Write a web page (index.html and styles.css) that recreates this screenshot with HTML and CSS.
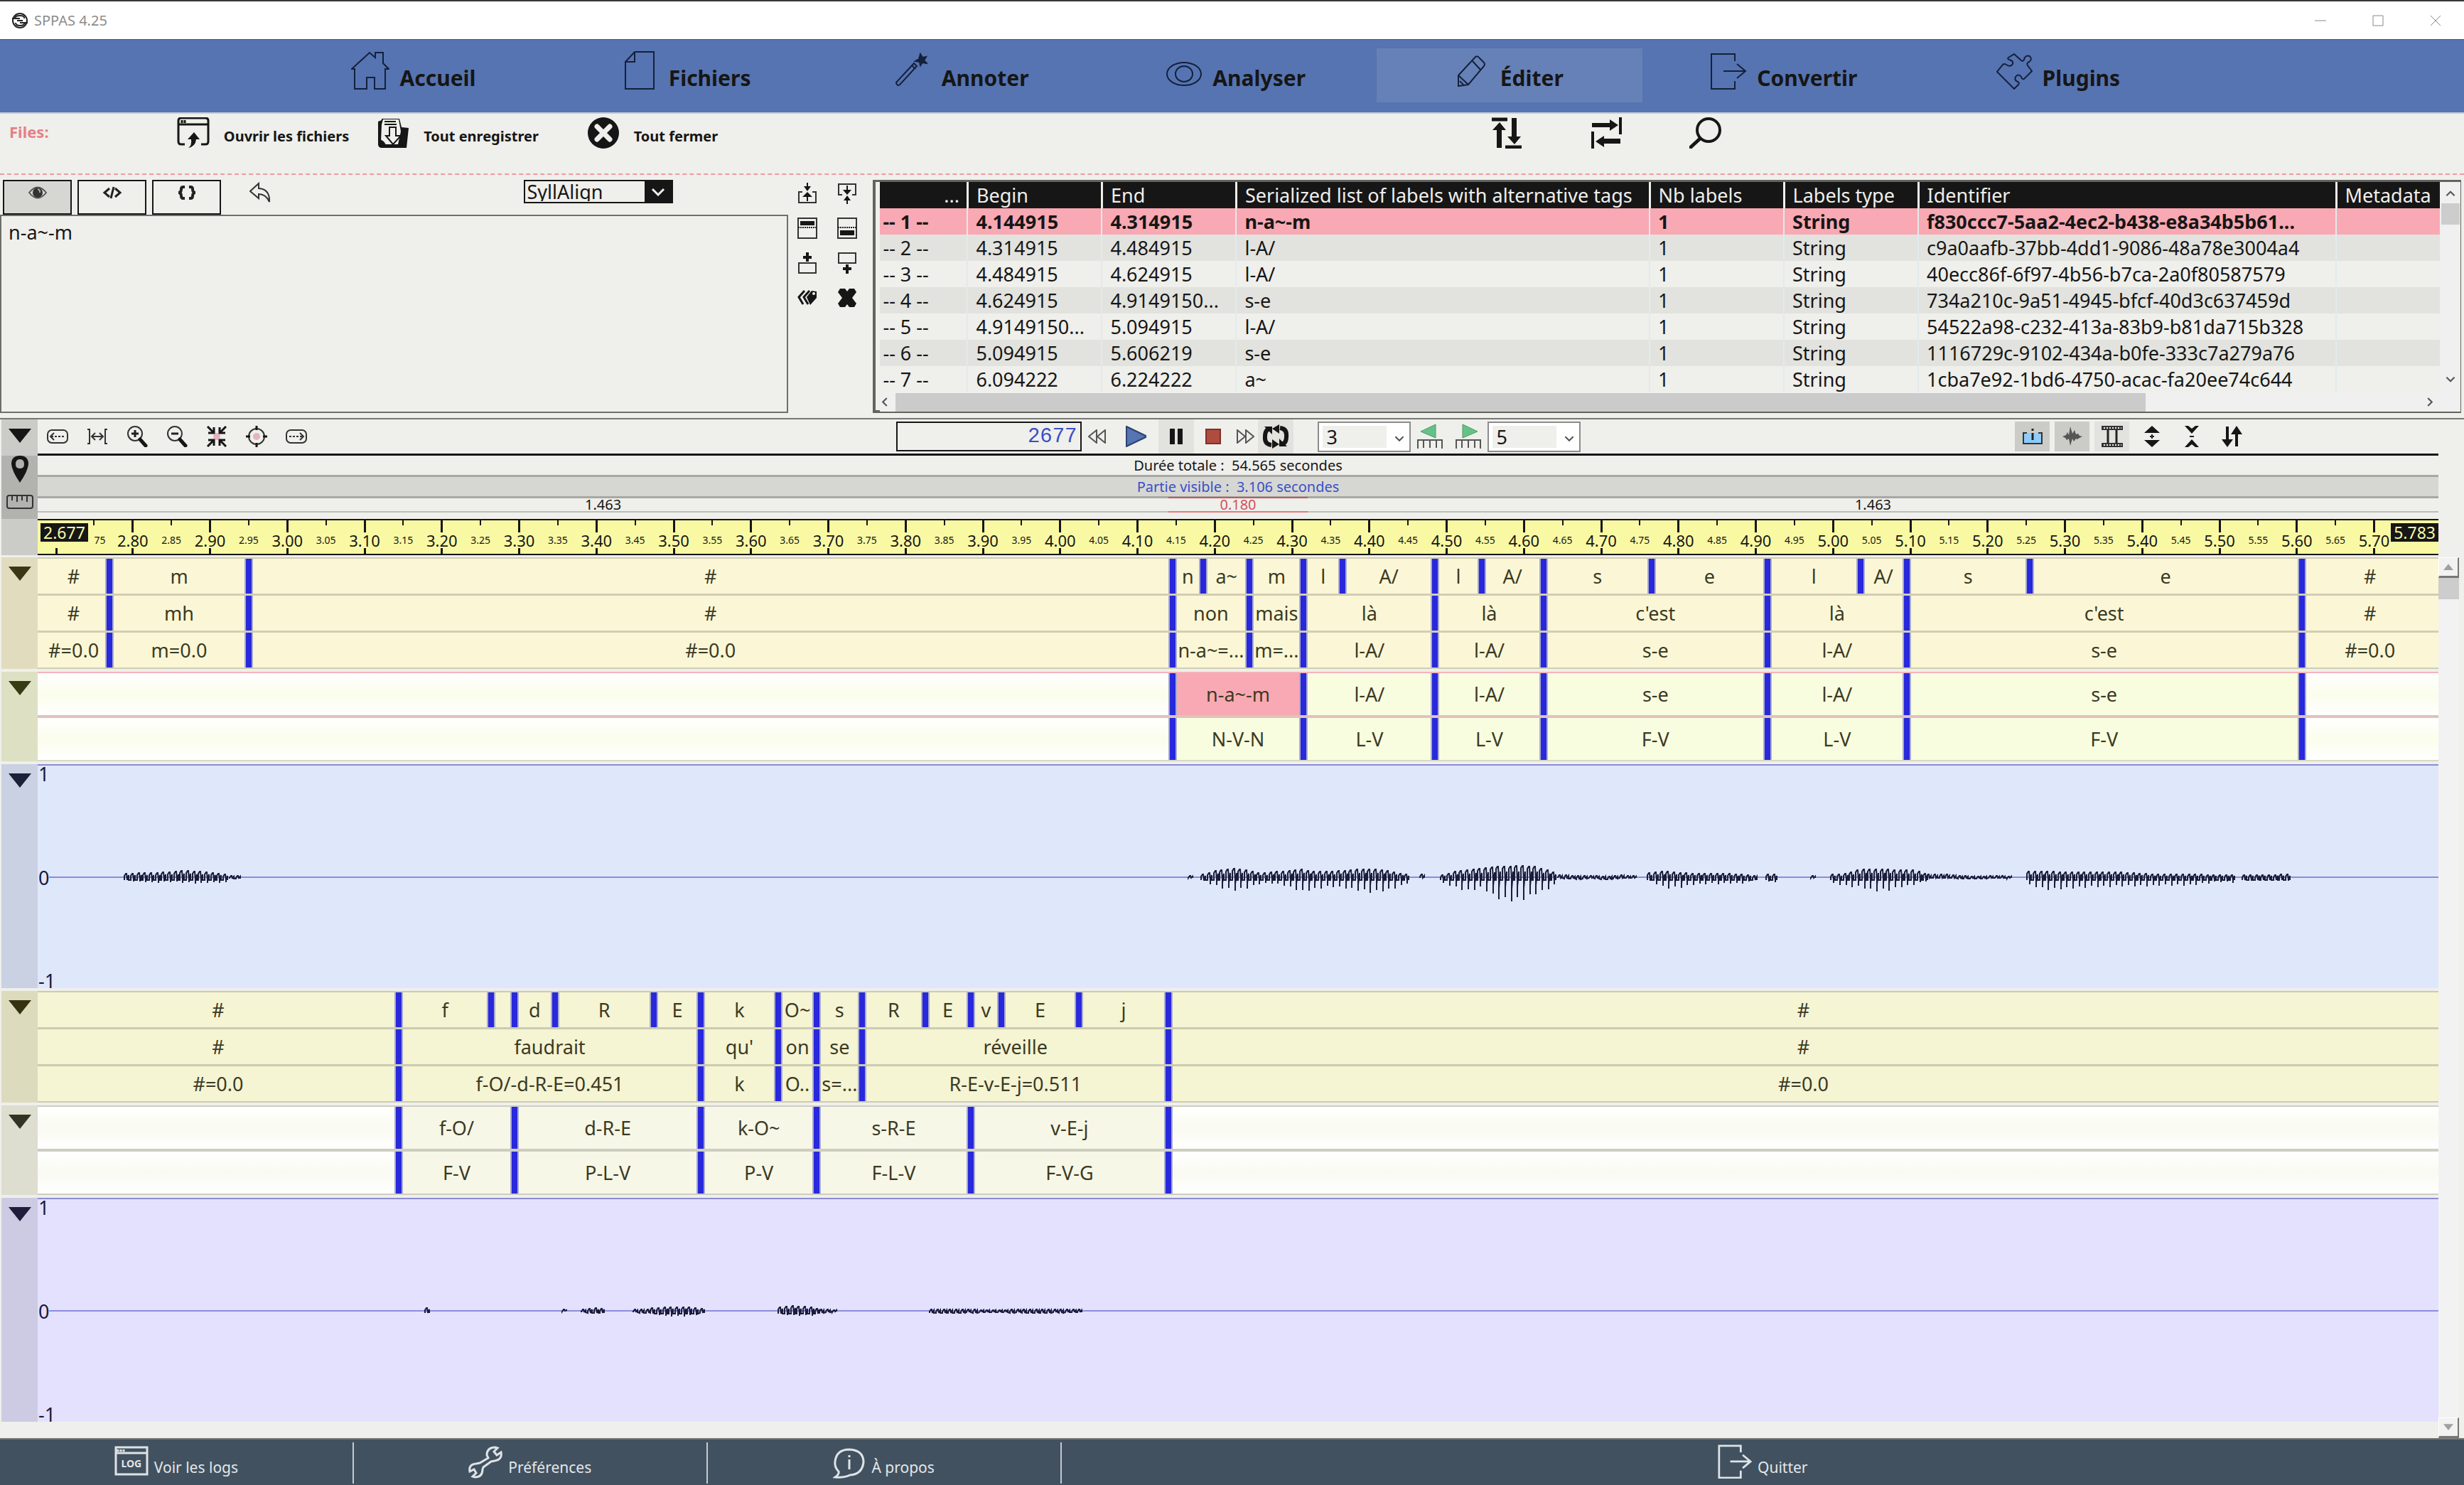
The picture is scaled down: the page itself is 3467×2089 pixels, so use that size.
FILE: index.html
```html
<!doctype html>
<html lang="fr">
  <head>
    <meta charset="utf-8" />
    <title>SPPAS 4.25</title>
    <link rel="stylesheet" href="styles.css">
  </head>
  <body>
    <svg class="sprite" aria-hidden="true">
      <symbol id="i-home" viewBox="0 0 54 54"><path d="M1 25 26 2 34 9V2h11v15l8 8H48V53H33V37H22V53H5V25Z" /></symbol>
      <symbol id="i-file" viewBox="0 0 42 54"><path d="M14 1H41V53H1V15ZM14 1V15H1" /></symbol>
      <symbol id="i-wand" viewBox="0 0 46 54"><path d="M2 44 27 17l4 4L7 47q-4 3-5-3ZM24 20l5 5" /><path d="M36 4l3 5 5-1-3 5 4 4-6-1-3 4-1-5-6-1 5-3Z" fill="#14203c" /></symbol>
      <symbol id="i-eye" viewBox="0 0 52 54"><ellipse cx="26" cy="32" rx="24" ry="16" /><ellipse cx="26" cy="32" rx="12" ry="11" /></symbol>
      <symbol id="i-pencil" viewBox="0 0 42 54"><path d="M3 34 27 8q3-2 6 2l6 6q2 2 0 5L17 47l-14 2ZM3 34l14 13M23 14l11 12M5 42l5 5" /></symbol>
      <symbol id="i-export" viewBox="0 0 52 54"><path d="M35 14V4H2V53H35V42M19 28H50M38 18 50 28 38 38" /></symbol>
      <symbol id="i-puzzle" viewBox="0 0 52 54"><path d="M26 4 36 13q2 2 4-1 1-7 8-5 4 5-1 8-4 2-2 5l6 8-11 11q-3 1-4-3-4-5-8 0-2 5 3 7 3 1 1 4L26 53 2 29 10 19q2-2 5 0 6 4 9-1 1-5-5-6-3-1-1-3Z" /></symbol>
      <symbol id="i-open" viewBox="0 0 46 44"><path d="M11 38H6q-4 0-4-4V5q0-4 4-4H40q4 0 4 4V34q0 4-4 4H34M2 10H44M7 4V8M11 4V8" fill="none" stroke="#161616" stroke-width="3" /><path d="M16 43Q21 40 20 31H15L24 21 32 31H27Q26 41 16 43Z" fill="#161616" /></symbol>
      <symbol id="i-save" viewBox="0 0 46 44"><path d="M2 6 7 4V2H32L35 14 45 15 42 43H6Q2 42 2 38Z" fill="#161616" /><path d="M9 3H31L34 20 30 38 10 38 6 34 7 10Z" fill="#efefeb" /><path d="M11 6H27M11 10H28" stroke="#161616" stroke-width="2" /><path d="M5 31 10 34 14 40 30 40 36 18 42 18 41 43H6Z" fill="#161616" /><path d="M18 14H27V26H34L23 38 13 26H18Z" fill="#efefeb" stroke="#161616" stroke-width="2" /></symbol>
      <symbol id="i-closeall" viewBox="0 0 46 44"><ellipse cx="23" cy="22" rx="22" ry="22" fill="#161616" /><path d="M14 13 32 31M32 13 14 31" stroke="#efefeb" stroke-width="7" stroke-linecap="round" /></symbol>
      <symbol id="i-vert" viewBox="0 0 44 44"><path d="M1 3H23M20 42H43" stroke="#161616" stroke-width="5" /><path d="M8 43V18H2L12 7 21 18H15V43ZM29 1H36V27H42L33 38 23 27H29Z" fill="#161616" /></symbol>
      <symbol id="i-horiz" viewBox="0 0 44 44"><path d="M42 0V24M3 20V44" stroke="#161616" stroke-width="4" /><path d="M2 8H27V3L39 11 27 19V14H2ZM42 30H19V26L7 34 19 42V37H42Z" fill="#161616" /></symbol>
      <symbol id="i-search" viewBox="0 0 46 44"><circle cx="27" cy="18" r="16" fill="none" stroke="#161616" stroke-width="4" /><path d="M15 30 2 42" stroke="#161616" stroke-width="5" stroke-linecap="round" /></symbol>
      <symbol id="t-eye" viewBox="0 0 28 18"><path d="M2 9Q14-6 26 9 14 24 2 9Z" fill="none" stroke="#555" stroke-width="2" /><circle cx="14" cy="9" r="7" fill="#333" /><path d="M14 4a4 4 0 0 1 3 5" stroke="#aaa" stroke-width="2" fill="none" /></symbol>
      <symbol id="t-code" viewBox="0 0 28 18"><path d="M10 3 3 9 10 15M18 3 25 9 18 15M16 1 12 17" fill="none" stroke="#222" stroke-width="3" /></symbol>
      <symbol id="t-brace" viewBox="0 0 28 20"><path d="M11 2H9Q6 2 6 5 6 10 2 10 6 10 6 15 6 18 9 18H11M17 2H19Q22 2 22 5 22 10 26 10 22 10 22 15 22 18 19 18H17" fill="none" stroke="#222" stroke-width="4" /></symbol>
      <symbol id="t-undo" viewBox="0 0 30 30"><path d="M13 2 1 13 13 23V17Q23 17 28 28 29 10 13 9Z" fill="none" stroke="#333" stroke-width="2" /></symbol>
      <symbol id="a-split-up" viewBox="0 0 28 30"><path d="M7 13H2V28H26V13H21" class="ln" /><path d="M13 0V5H9L14 12 19 5H15V0ZM13 26V20H7L14 13 21 20H15V26Z" class="fl" /></symbol>
      <symbol id="a-split-down" viewBox="0 0 28 30"><path d="M7 17H2V2H26V17H21" class="ln" /><path d="M13 4V10H8L14 17 20 10H15V4ZM13 30V25H9L14 18 19 25H15V30Z" class="fl" /></symbol>
      <symbol id="a-merge-up" viewBox="0 0 28 30"><path d="M1 1H27V29H1Z" class="ln" /><path d="M4 5H24V11H4Z" class="fl" /><path d="M1 14H27" stroke="#222" stroke-width="2" stroke-dasharray="2 1" /></symbol>
      <symbol id="a-merge-down" viewBox="0 0 28 30"><path d="M1 1H27V29H1Z" class="ln" /><path d="M4 18H24V25H4Z" class="fl" /><path d="M1 14H27" stroke="#222" stroke-width="2" stroke-dasharray="2 1" /></symbol>
      <symbol id="a-add-up" viewBox="0 0 28 30"><path d="M2 15H26V29H2Z" class="ln" /><path d="M14 0V13M8 7H20" stroke="#161616" stroke-width="4" /></symbol>
      <symbol id="a-add-down" viewBox="0 0 28 30"><path d="M2 1H26V15H2Z" class="ln" /><path d="M14 17V30M8 23H20" stroke="#161616" stroke-width="4" /></symbol>
      <symbol id="a-tags" viewBox="0 0 28 30"><path d="M13 14 20 5 27 6V15L18 25Z" class="fl" /><path d="M10 5 2 14 8 24M17 5 9 14 15 24" fill="none" stroke="#161616" stroke-width="3" /><circle cx="23" cy="9" r="2" fill="#efefeb" /></symbol>
      <symbol id="a-cross" viewBox="0 0 28 30"><path d="M4 2H11L14 6 17 2H24L27 7 21 15 27 23 24 28H17L14 24 11 28H4L1 23 7 15 1 7Z" class="fl" /></symbol>
      <symbol id="g-left" viewBox="0 0 30 30"><rect x="1" y="6" width="28" height="18" rx="6" class="ln" /><path d="M10 10 5 15 10 20" class="ln" /><path d="M6 15H25" class="ln" stroke-dasharray="3 2" /></symbol>
      <symbol id="g-right" viewBox="0 0 30 30"><rect x="1" y="6" width="28" height="18" rx="6" class="ln" /><path d="M20 10 25 15 20 20" class="ln" /><path d="M5 15H24" class="ln" stroke-dasharray="3 2" /></symbol>
      <symbol id="g-fit" viewBox="0 0 30 30"><path d="M1 5H4V25H1M29 5H26V25H29M12 10 7 15 12 20M18 10 23 15 18 20M8 15H22" class="ln" /></symbol>
      <symbol id="g-plus" viewBox="0 0 30 30"><circle cx="12" cy="11" r="10" class="ln" /><path d="M12 6V16M7 11H17" stroke="#222" stroke-width="3" /><path d="M19 19 27 28" stroke="#161616" stroke-width="5" stroke-linecap="round" /></symbol>
      <symbol id="g-minus" viewBox="0 0 30 30"><circle cx="12" cy="11" r="10" class="ln" /><path d="M7 11H17" stroke="#222" stroke-width="3" /><path d="M19 19 27 28" stroke="#161616" stroke-width="5" stroke-linecap="round" /></symbol>
      <symbol id="g-shrink" viewBox="0 0 30 30"><circle cx="15" cy="15" r="5" fill="#e6b3bb" /><path d="M2 1 10 9M11 2V10H3M28 1 20 9M19 2V10H27M2 29 10 21M11 28V20H3M28 29 20 21M19 28V20H27" stroke="#161616" stroke-width="3" fill="none" /></symbol>
      <symbol id="g-target" viewBox="0 0 30 30"><circle cx="15" cy="15" r="11" class="ln" /><circle cx="15" cy="15" r="5" fill="#e6b3bb" /><path d="M15 0V6M15 24V30M0 15H6M24 15H30" stroke="#161616" stroke-width="3" /></symbol>
      <symbol id="p-rew" viewBox="0 0 26 20"><path d="M12 1 1 10 12 19ZM24 1 13 10 24 19Z" fill="none" stroke="#555" stroke-width="2" /></symbol>
      <symbol id="p-fwd" viewBox="0 0 26 20"><path d="M2 1 13 10 2 19ZM14 1 25 10 14 19Z" fill="none" stroke="#555" stroke-width="2" /></symbol>
      <symbol id="p-play" viewBox="0 0 30 30"><path d="M2 1 29 14V16L2 29Z" fill="#5674b1" stroke="#2c4272" stroke-width="2" /></symbol>
      <symbol id="p-pause" viewBox="0 0 22 22"><path d="M2 0H9V22H2ZM13 0H20V22H13Z" class="fl" /></symbol>
      <symbol id="p-stop" viewBox="0 0 22 22"><path d="M1 1H21V21H1Z" fill="#b04b40" stroke="#7c3229" stroke-width="2" /></symbol>
      <symbol id="p-loop" viewBox="0 0 38 34"><path d="M13 29Q3 28 4 17 4 7 11 6M25 5Q35 6 34 17 34 27 27 28" fill="none" stroke="#161616" stroke-width="6" /><path d="M14 6 24 0V13ZM24 28 14 21V34ZM3 3H14V14ZM35 31H24V20Z" class="fl" /></symbol>
      <symbol id="p-prev" viewBox="0 0 38 36"><path d="M27 1V20L6 11Z" fill="#66c186" stroke="#4b9b68" /><path d="M2 35V23H36V35M10 24V34M19 24V34M28 24V34" fill="none" stroke="#555" stroke-width="2" /></symbol>
      <symbol id="p-next" viewBox="0 0 38 36"><path d="M11 1V20L32 11Z" fill="#66c186" stroke="#4b9b68" /><path d="M2 35V23H36V35M10 24V34M19 24V34M28 24V34" fill="none" stroke="#555" stroke-width="2" /></symbol>
      <symbol id="v-info" viewBox="0 0 30 30"><path d="M7 10H2V25H28V10H23" fill="#8ecbff" stroke="#333" stroke-width="2" /><path d="M15 10V20M15 4V7" stroke="#222" stroke-width="3" /></symbol>
      <symbol id="v-wave" viewBox="0 0 30 30"><path d="M1 15 6 13 8 9 10 13 12 1 15 11 18 6 20 12 23 11 25 14 29 15 25 17 22 19 20 18 17 22 15 18 12 28 10 18 7 20 5 17Z" fill="#555" /></symbol>
      <symbol id="v-film" viewBox="0 0 30 30"><path d="M0 0H30V6H0ZM0 24H30V30H0Z" fill="#333" /><path d="M3 3H28M3 27H28" stroke="#eee" stroke-width="2" stroke-dasharray="2 2" /><path d="M9 6V24M21 6V24" stroke="#222" stroke-width="3" /></symbol>
      <symbol id="v-expand" viewBox="0 0 30 30"><path d="M15 0 26 10H4ZM15 30 26 20H4Z" class="fl" /><path d="M15 12V18M12 15H18" stroke="#222" stroke-width="2" /></symbol>
      <symbol id="v-collapse" viewBox="0 0 30 30"><path d="M5 0H10L15 4 20 0H25L15 11ZM5 30H10L15 26 20 30H25L15 19Z" class="fl" /><path d="M12 15H18" stroke="#222" stroke-width="2" /></symbol>
      <symbol id="v-swap" viewBox="0 0 30 30"><path d="M7 1H11V19H17L9 30 1 19H7ZM20 29V12H14L22 0 30 12H24V29Z" class="fl" /></symbol>
      <symbol id="m-tri" viewBox="0 0 32 20"><path d="M0 0H32L16 20Z" fill="currentColor" /></symbol>
      <symbol id="m-pin" viewBox="0 0 24 38"><path d="M12 0Q24 0 24 12 23 22 12 38 1 22 0 12 0 0 12 0ZM12 5Q6 5 6 12 6 18 12 18 18 18 18 12 18 5 12 5Z" fill="#161616" fill-rule="evenodd" /></symbol>
      <symbol id="m-rule" viewBox="0 0 38 22"><rect x="1" y="2" width="36" height="18" rx="3" class="ln" /><path d="M8 2V9M15 2V11M22 2V9M29 2V11" class="ln" /></symbol>
      <symbol id="chev" viewBox="0 0 20 12"><path d="M2 2 10 10 18 2" fill="none" stroke="currentColor" stroke-width="3" /></symbol>
      <symbol id="f-log" viewBox="0 0 48 42"><path d="M2 2H46V40H2ZM2 10H46M5 5V8M9 5V8M13 5V8" /></symbol>
      <symbol id="f-wrench" viewBox="0 0 48 46"><path d="M28 17 26 13Q26 2 38 2L41 3 36 8 40 13 46 9Q48 19 37 21L32 22 21 30 20 33Q20 44 9 44L6 43 11 38 8 33 2 36Q0 26 11 25L16 24Z" /></symbol>
      <symbol id="f-info" viewBox="0 0 46 44"><path d="M8 34Q2 28 3 20 5 3 23 3 43 4 43 21 41 38 24 39 16 43 3 42 9 38 8 34ZM23 17V31M23 11V14" /></symbol>
    </svg>

    <header class="titlebar">
      <svg class="logo" viewBox="0 0 24 24"><circle cx="12" cy="12" r="10" fill="none" stroke="#222" stroke-width="2" /><path d="M1 9H12M12 15H23M5 9Q5 5 12 5T18 9M6 15Q6 19 12 19T19 15M8 12H16" fill="none" stroke="#222" stroke-width="2" /></svg>
      <span class="app-name">SPPAS 4.25</span>
      <div class="win-buttons">
        <button aria-label="Réduire"><svg viewBox="0 0 16 16"><path d="M0 8H16" /></svg></button>
        <button aria-label="Agrandir"><svg viewBox="0 0 16 16"><path d="M1 1H15V15H1Z" /></svg></button>
        <button aria-label="Fermer"><svg viewBox="0 0 16 16"><path d="M1 1 15 15M15 1 1 15" /></svg></button>
      </div>
    </header>

    <nav class="pages">
      <button><svg width="54" height="54"><use href="#i-home" /></svg>Accueil</button>
      <button><svg width="42" height="54"><use href="#i-file" /></svg><span class="wide">Fichiers</span></button>
      <button><svg width="46" height="54"><use href="#i-wand" /></svg><span class="wide">Annoter</span></button>
      <button><svg width="52" height="54"><use href="#i-eye" /></svg>Analyser</button>
      <button class="active"><svg width="42" height="54"><use href="#i-pencil" /></svg><span class="wide">Éditer</span></button>
      <button><svg width="52" height="54"><use href="#i-export" /></svg>Convertir</button>
      <button><svg width="52" height="54"><use href="#i-puzzle" /></svg>Plugins</button>
    </nav>

    <div class="files-bar">
      <span class="files-title">Files:</span>
      <button><svg width="46" height="44"><use href="#i-open" /></svg>Ouvrir les fichiers</button>
      <button><svg width="46" height="44"><use href="#i-save" /></svg>Tout enregistrer</button>
      <button><svg width="46" height="44"><use href="#i-closeall" /></svg>Tout fermer</button>
      <div class="files-tools">
        <button aria-label="Basculer verticalement"><svg width="46" height="44"><use href="#i-vert" /></svg></button>
        <button aria-label="Basculer horizontalement"><svg width="46" height="44"><use href="#i-horiz" /></svg></button>
        <button aria-label="Rechercher"><svg width="46" height="44"><use href="#i-search" /></svg></button>
      </div>
    </div>

    <section class="annotation">
      <div class="editor">
        <div class="editor-bar">
          <button class="tab on" aria-label="Texte"><svg width="28" height="18"><use href="#t-eye" /></svg></button>
          <button class="tab" aria-label="XML"><svg width="28" height="18"><use href="#t-code" /></svg></button>
          <button class="tab" aria-label="JSON"><svg width="28" height="20"><use href="#t-brace" /></svg></button>
          <button class="undo" aria-label="Restaurer"><svg width="30" height="30"><use href="#t-undo" /></svg></button>
          <div class="tier-pick">
            <select aria-label="Tier"><option>SyllAlign</option></select>
            <svg width="20" height="12"><use href="#chev" /></svg>
          </div>
        </div>
        <textarea aria-label="Labels">n-a~-m</textarea>
      </div>

      <div class="ann-tools">
        <button aria-label="Diviser"><svg width="28" height="30"><use href="#a-split-up" /></svg></button>
        <button aria-label="Diviser suivant"><svg width="28" height="30"><use href="#a-split-down" /></svg></button>
        <button aria-label="Fusionner précédent"><svg width="28" height="30"><use href="#a-merge-up" /></svg></button>
        <button aria-label="Fusionner suivant"><svg width="28" height="30"><use href="#a-merge-down" /></svg></button>
        <button aria-label="Ajouter avant"><svg width="28" height="30"><use href="#a-add-up" /></svg></button>
        <button aria-label="Ajouter après"><svg width="28" height="30"><use href="#a-add-down" /></svg></button>
        <button aria-label="Métadonnées"><svg width="28" height="30"><use href="#a-tags" /></svg></button>
        <button aria-label="Supprimer"><svg width="28" height="30"><use href="#a-cross" /></svg></button>
      </div>

      <div class="list">
        <table>
          <colgroup>
            <col class="c-num"><col class="c-time"><col class="c-time"><col><col class="c-time"><col class="c-time"><col class="c-id"><col class="c-meta">
          </colgroup>
          <thead>
            <tr><th>...</th><th>Begin</th><th>End</th><th>Serialized list of labels with alternative tags</th><th>Nb labels</th><th>Labels type</th><th>Identifier</th><th>Metadata</th></tr>
          </thead>
          <tbody>
            <tr class="selected"><td>-- 1 --</td><td>4.144915</td><td>4.314915</td><td>n-a~-m</td><td>1</td><td>String</td><td>f830ccc7-5aa2-4ec2-b438-e8a34b5b61...</td><td></td></tr>
            <tr><td>-- 2 --</td><td>4.314915</td><td>4.484915</td><td>l-A/</td><td>1</td><td>String</td><td>c9a0aafb-37bb-4dd1-9086-48a78e3004a4</td><td></td></tr>
            <tr><td>-- 3 --</td><td>4.484915</td><td>4.624915</td><td>l-A/</td><td>1</td><td>String</td><td>40ecc86f-6f97-4b56-b7ca-2a0f80587579</td><td></td></tr>
            <tr><td>-- 4 --</td><td>4.624915</td><td>4.9149150...</td><td>s-e</td><td>1</td><td>String</td><td>734a210c-9a51-4945-bfcf-40d3c637459d</td><td></td></tr>
            <tr><td>-- 5 --</td><td>4.9149150...</td><td>5.094915</td><td>l-A/</td><td>1</td><td>String</td><td>54522a98-c232-413a-83b9-b81da715b328</td><td></td></tr>
            <tr><td>-- 6 --</td><td>5.094915</td><td>5.606219</td><td>s-e</td><td>1</td><td>String</td><td>1116729c-9102-434a-b0fe-333c7a279a76</td><td></td></tr>
            <tr><td>-- 7 --</td><td>6.094222</td><td>6.224222</td><td>a~</td><td>1</td><td>String</td><td>1cba7e92-1bd6-4750-acac-fa20ee74c644</td><td></td></tr>
          </tbody>
        </table>
        <div class="vbar">
          <svg class="up" width="14" height="9"><use href="#chev" /></svg>
          <span class="thumb"></span>
          <svg class="down" width="14" height="9"><use href="#chev" /></svg>
        </div>
        <div class="hbar">
          <svg class="left" width="14" height="9"><use href="#chev" /></svg>
          <span class="thumb"></span>
          <svg class="right" width="14" height="9"><use href="#chev" /></svg>
        </div>
      </div>
    </section>

    <main class="timeline">
      <div class="row head">
        <div class="gutter g-light"><svg width="32" height="20"><use href="#m-tri" /></svg></div>
        <div class="controls">
          <div class="zoom-tools">
            <button aria-label="Reculer"><svg width="30" height="30"><use href="#g-left" /></svg></button>
            <button aria-label="Tout afficher"><svg width="30" height="30"><use href="#g-fit" /></svg></button>
            <button aria-label="Zoom avant"><svg width="30" height="30"><use href="#g-plus" /></svg></button>
            <button aria-label="Zoom arrière"><svg width="30" height="30"><use href="#g-minus" /></svg></button>
            <button aria-label="Zoom sélection"><svg width="30" height="30"><use href="#g-shrink" /></svg></button>
            <button aria-label="Centrer"><svg width="30" height="30"><use href="#g-target" /></svg></button>
            <button aria-label="Avancer"><svg width="30" height="30"><use href="#g-right" /></svg></button>
          </div>
          <div class="player">
            <input class="clock" aria-label="Temps" value="2677">
            <button class="p-rew" aria-label="Retour rapide"><svg width="26" height="20"><use href="#p-rew" /></svg></button>
            <button class="p-play" aria-label="Lecture"><svg width="30" height="30"><use href="#p-play" /></svg></button>
            <button class="shade" aria-label="Pause"><svg width="22" height="22"><use href="#p-pause" /></svg></button>
            <button class="p-step" aria-label="Arrêt"><svg width="22" height="22"><use href="#p-stop" /></svg></button>
            <button class="p-fwd" aria-label="Avance rapide"><svg width="26" height="20"><use href="#p-fwd" /></svg></button>
            <button class="shade" aria-label="Boucle"><svg width="38" height="34"><use href="#p-loop" /></svg></button>
            <div class="combo combo-first">
              <select aria-label="Images avant"><option>3</option></select>
              <svg width="14" height="10"><use href="#chev" /></svg>
            </div>
            <button class="p-step" aria-label="Image précédente"><svg width="38" height="36"><use href="#p-prev" /></svg></button>
            <button class="p-step" aria-label="Image suivante"><svg width="38" height="36"><use href="#p-next" /></svg></button>
            <div class="combo">
              <select aria-label="Images après"><option>5</option></select>
              <svg width="14" height="10"><use href="#chev" /></svg>
            </div>
          </div>
          <div class="view-tools">
            <button class="pressed" aria-label="Infos"><svg width="30" height="30"><use href="#v-info" /></svg></button>
            <button class="pressed" aria-label="Onde"><svg width="30" height="30"><use href="#v-wave" /></svg></button>
            <button class="shade" aria-label="Film"><svg width="30" height="30"><use href="#v-film" /></svg></button>
            <button aria-label="Agrandir les pistes"><svg width="30" height="30"><use href="#v-expand" /></svg></button>
            <button aria-label="Réduire les pistes"><svg width="30" height="30"><use href="#v-collapse" /></svg></button>
            <button aria-label="Trier"><svg width="30" height="30"><use href="#v-swap" /></svg></button>
          </div>
        </div>
      </div>

      <div class="row head">
        <div class="gutter g-dark">
          <svg width="24" height="38"><use href="#m-pin" /></svg>
          <svg width="38" height="22"><use href="#m-rule" /></svg>
        </div>
        <div class="durations">
          <div class="total">Durée totale :&nbsp; 54.565 secondes</div>
          <div class="visible">Partie visible :&nbsp; 3.106 secondes</div>
          <div class="parts">
            <span style="flex-grow: 1463">1.463</span>
            <span class="sel" style="flex-grow: 180">0.180</span>
            <span style="flex-grow: 1463">1.463</span>
          </div>
        </div>
      </div>

      <div class="row head">
        <div class="gutter g-light"></div>
        <div class="ruler" id="ruler">
          <div class="end start"><b>2.677</b></div>
          <div class="end stop"><b>5.783</b></div>
        </div>
      </div>

      <div class="tracks">
        <div class="track-list" id="tracks"></div>
        <div class="track-bar">
          <span class="btn"><svg width="14" height="9"><use href="#m-tri" /></svg></span>
          <span class="thumb"></span>
          <span class="btn last"><svg width="14" height="9"><use href="#m-tri" /></svg></span>
        </div>
      </div>
    </main>

    <footer class="actions">
      <button><span class="log-icon"><svg width="48" height="42"><use href="#f-log" /></svg><b>LOG</b></span>Voir les logs</button>
      <button><svg width="48" height="46"><use href="#f-wrench" /></svg>Préférences</button>
      <button><svg width="46" height="44"><use href="#f-info" /></svg>À propos</button>
      <button class="quit"><svg width="48" height="50"><use href="#i-export" /></svg>Quitter</button>
    </footer>
    <script src="timeline.js"></script>
  </body>
</html>
```
FILE: styles.css
```css
* {
  box-sizing: border-box;
}
body {
  margin: 0;
  min-height: 100vh;
  display: flex;
  flex-direction: column;
  background: #efefeb;
  color: #161616;
  font-family: "Noto Sans", "Open Sans", sans-serif;
  font-size: 27px;
  line-height: 36px;
}
button,
select,
input,
textarea {
  font: inherit;
  color: inherit;
  border: none;
  background: none;
  padding: 0;
  margin: 0;
  border-radius: 0;
}
button,
button svg {
  display: flex;
  flex: none;
}
button {
  align-items: center;
  justify-content: center;
}
select {
  appearance: none;
}
.sprite {
  display: none;
}
.ln {
  fill: none;
  stroke: #333;
  stroke-width: 2;
}
.fl {
  fill: #161616;
}

/* title bar */
.titlebar {
  display: flex;
  align-items: center;
  height: 55px;
  padding-left: 16px;
  border-top: 2px solid #3a3638;
  background: #fff;
}
.logo {
  width: 24px;
  height: 24px;
}
.app-name {
  margin-left: 8px;
  font-size: 20px;
  color: #8c8c8c;
}
.win-buttons {
  display: flex;
  margin-left: auto;
}
.win-buttons button {
  width: 81px;
  height: 53px;
}
.win-buttons svg {
  width: 16px;
  height: 16px;
  fill: none;
  stroke: #888;
}

/* pages */
.pages {
  display: grid;
  grid-template-columns: repeat(7, 1fr);
  gap: 12px;
  height: 105px;
  padding: 12px 11.1% 14px 11.4%;
  border-top: 1px solid #3f5a94;
  border-bottom: 2px solid #c4cbd8;
  background: #5674b1;
}
.pages button {
  align-items: flex-end;
  gap: 14px;
  padding-bottom: 18px;
  font-size: 30px;
  line-height: 32px;
  font-weight: bold;
}
.pages .active {
  background: #6681b7;
}
.pages .wide {
  padding-left: 6px;
}
.pages svg {
  fill: none;
  stroke: #14203c;
  stroke-width: 2;
}

/* files */
.files-bar {
  display: flex;
  align-items: flex-start;
  height: 86px;
  padding-top: 5px;
  border-bottom: 2px dashed #ef9aa2;
  font-size: 20px;
  font-weight: bold;
}
.files-title {
  width: 233px;
  padding-left: 13px;
  line-height: 40px;
  color: #e77f86;
  font-size: 22px;
}
.files-bar > button {
  align-items: flex-end;
  width: 274px;
  gap: 20px;
  line-height: 34px;
  height: 44px;
}
.files-tools {
  display: flex;
  gap: 94px;
  margin-left: auto;
  margin-right: 30.1%;
}

/* annotation panel */
.annotation {
  display: grid;
  grid-template-columns: 32% 119px 1fr;
  padding-top: 7px;
}
.editor {
  display: flex;
  flex-direction: column;
}
.editor-bar {
  display: flex;
  align-items: flex-start;
  gap: 8px;
  height: 49px;
  padding-left: 4px;
}
.tab {
  width: 97px;
  height: 49px;
  padding-bottom: 13px;
  border: 2px solid #161616;
}
.tab.on {
  background: #d6d7d2;
}
.undo {
  margin: 3px 0 0 32px;
}
.tier-pick {
  position: relative;
  width: 210px;
  height: 33px;
  margin-left: auto;
  margin-right: 162px;
  border: 2px solid #161616;
  background: linear-gradient(to right, transparent 168px, #161616 168px);
}
.tier-pick select {
  display: block;
  width: 100%;
  height: 29px;
  padding-left: 2px;
  line-height: 26px;
}
.tier-pick svg {
  position: absolute;
  right: 9px;
  top: 9px;
  color: #efefeb;
  pointer-events: none;
}
textarea {
  flex: 1;
  resize: none;
  padding: 5px 10px;
  border: 2px solid #6f6f6a;
}
.ann-tools {
  display: grid;
  grid-template-columns: 28px 28px;
  grid-auto-rows: 30px;
  gap: 19px 28px;
  padding: 4px 0 0 13px;
}
.list {
  display: grid;
  grid-template-columns: 1fr 29px;
  grid-template-rows: auto 27px;
  padding: 0 0 2px 6px;
  margin-right: 4px;
  border: 4px solid #63635f;
  border-top-width: 3px;
  border-right-width: 1px;
  height: 328px;
}
.list table {
  table-layout: fixed;
  width: 100%;
  border-collapse: collapse;
  background: #efefeb;
}
.c-num {
  width: 123px;
}
.c-time {
  width: 189px;
}
.c-id {
  width: 588px;
}
.c-meta {
  width: 146px;
}
.list th,
.list td {
  height: 37px;
  padding: 0 0 0 11px;
  border-right: 2px solid #e2ebec;
  line-height: 36px;
  text-align: left;
  white-space: nowrap;
}
.list th {
  background: #161616;
  color: #efefeb;
  font-weight: normal;
  border-right: 3px solid #efefeb;
}
.list th:first-child {
  padding-right: 10px;
  text-align: right;
}
.list td:first-child {
  padding-left: 4px;
}
.list th:last-child,
.list td:last-child {
  border-right: none;
}
.list tbody tr:nth-child(even) {
  background: #e2e3de;
}
.list .selected {
  background: #f9a9b3;
  font-weight: bold;
}
.vbar,
.hbar {
  display: flex;
  align-items: center;
  background: #f0f0f0;
  color: #555;
}
.vbar {
  flex-direction: column;
  padding: 12px 0 14px;
}
.vbar .thumb {
  width: 26px;
  height: 30px;
  margin-top: 9px;
  background: #cdcdcd;
}
.vbar .up {
  transform: rotate(180deg);
}
.vbar .down {
  margin-top: auto;
}
.hbar {
  grid-column: span 2;
  padding-right: 36px;
}
.hbar .thumb {
  width: 80.4%;
  height: 26px;
  margin-left: 8px;
  background: #cbcbcb;
}
.hbar .left {
  transform: rotate(90deg);
}
.hbar .right {
  margin-left: auto;
  transform: rotate(-90deg);
}

/* timeline */
.timeline {
  flex: 1;
  display: flex;
  flex-direction: column;
  margin-top: 7px;
  padding-left: 2px;
  border-top: 2px solid #777772;
}
.row {
  display: flex;
}
.head {
  padding-right: 36px;
}
.row > :last-child {
  flex: 1;
  min-width: 0;
}
.gutter {
  display: flex;
  flex: none;
  flex-direction: column;
  align-items: center;
  width: 51px;
  padding-top: 13px;
}
.g-light {
  background: #cbcbc7;
}
.g-dark {
  justify-content: space-between;
  padding: 0 0 13px;
  background: #b2b2ae;
}
.controls {
  display: grid;
  grid-template-columns: 1fr auto 1fr;
  height: 51px;
  border-bottom: 3px solid #161616;
}
.zoom-tools,
.player,
.view-tools {
  display: flex;
  align-items: center;
}
.zoom-tools {
  gap: 26px;
  padding-left: 13px;
}
.view-tools {
  justify-content: flex-end;
  gap: 7px;
  padding-right: 267px;
}
.view-tools button {
  width: 49px;
  height: 42px;
}
.pressed {
  background: #cbcbc7;
}
.shade {
  background: #e2e3de;
}
.clock {
  width: 261px;
  height: 42px;
  padding-right: 4px;
  border: 2px solid #161616;
  color: #3850c8;
  font: 29px "Liberation Mono", monospace;
  text-align: right;
}
.player button {
  height: 48px;
}
.player .p-rew {
  width: 44px;
}
.player .p-play {
  width: 64px;
}
.player .p-fwd {
  width: 36px;
}
.player .p-step {
  width: 54px;
}
.player .shade {
  width: 50px;
}
.combo {
  position: relative;
  width: 131px;
  height: 43px;
  padding: 4px 32px 4px 5px;
  border: 2px solid #8c8c8c;
  background: #fff;
}
.combo-first {
  margin-left: 34px;
}
.combo select {
  display: block;
  width: 100%;
  height: 31px;
  padding-left: 6px;
  background: #efefeb;
  line-height: 31px;
}
.combo svg {
  position: absolute;
  right: 7px;
  top: 17px;
  color: #555;
  pointer-events: none;
}
.durations {
  font-size: 20px;
  line-height: 27px;
  text-align: center;
  padding-bottom: 9px;
}
.total,
.visible {
  border-bottom: 3px solid #a8a8a4;
}
.visible {
  background: #d6d7d2;
  color: #3850c8;
}
.parts {
  display: flex;
  line-height: 18px;
}
.parts span {
  flex-basis: 0;
  border-bottom: 2px solid #bcbcb8;
}
.parts .sel {
  color: #d0525c;
  border-color: #e27a80;
  box-shadow: 0 -2px #d0525c;
}
.ruler {
  position: relative;
  display: flex;
  height: 51px;
  border: solid #161616;
  border-width: 2px 0;
  background: #f9f9a4;
  overflow: hidden;
}
.mark {
  flex: 50 0 0;
  min-width: 0;
  display: flex;
  flex-direction: column;
  align-items: center;
  font-size: 14px;
  line-height: 22px;
  white-space: nowrap;
}
.mark span {
  height: 22px;
}
.mark::before {
  content: "";
  width: 2px;
  height: 7px;
  margin-bottom: 10px;
  background: #161616;
}
.mark.major {
  font-size: 22px;
}
.mark.major::before {
  width: 3px;
  height: 17px;
  margin-bottom: 0;
}
.mark.major::after {
  content: "";
  width: 3px;
  height: 8px;
  background: #161616;
}
.mark.partial span {
  padding-left: 16px;
}
.end {
  position: absolute;
  top: 0;
  display: flex;
  height: 38px;
  padding: 4px;
  background: #f9f9a4;
}
.end b {
  height: 26px;
  padding: 0 4px;
  background: #161616;
  color: #f9f9a4;
  font-size: 23px;
  line-height: 26px;
  font-weight: normal;
}
.start {
  left: 0;
  padding-right: 0;
}
.stop {
  right: 0;
  padding: 4px 0 0;
}

/* tracks */
.tracks {
  flex: 1;
  display: flex;
  padding: 3px 7px 0 0;
}
.track-list {
  flex: 1;
  min-width: 0;
  display: flex;
  flex-direction: column;
  gap: 4px;
  padding-bottom: 22px;
}
.tier {
  display: flex;
  height: 49px;
}
.tier + .tier {
  border-top: 3px solid var(--line);
  height: 52px;
}
.tall .tier {
  height: 59px;
}
.tall .tier + .tier {
  border-top-width: 4px;
  height: 63px;
}
.body {
  border: solid var(--line);
  border-width: 2px 0;
  color: #3b3a24;
}
.ann {
  position: relative;
  flex-basis: 0;
  min-width: 0;
  display: flex;
  align-items: center;
  justify-content: center;
  background: var(--fill);
  white-space: nowrap;
}
.ann.blank {
  background: linear-gradient(#fff, var(--blank), #fff);
}
.ann.current {
  background: #f9a9b3;
}
.ann:not(:last-child)::after {
  content: "";
  position: absolute;
  z-index: 1;
  top: 0;
  bottom: 0;
  right: -6px;
  width: 8px;
  border: solid #a9abcc;
  border-width: 0 2px;
  background: #2828dc;
}
.t1 {
  --fill: #fbf7d6;
  --line: #d2cdb2;
}
.t1 .gutter {
  background: #e1dcbe;
  color: #3b3614;
}
.t2 {
  --fill: #f9fddf;
  --blank: #fbfdec;
  --line: #dfc3bb;
}
.t2 .gutter {
  background: #dee0c3;
  color: #363b14;
}
.t2 .body {
  border-top-color: #f5b4bc;
  border-bottom-color: #d8d9c4;
}
.t3 .gutter {
  background: #dddbbd;
  color: #35330f;
}
.t3 {
  --fill: #f5f4d3;
  --line: #cccbb2;
}
.t4 {
  --fill: #f7f7e7;
  --blank: #f9faf1;
  --line: #cdcec0;
}
.t4 .gutter {
  background: #ddddd0;
  color: #333323;
}
.wave {
  display: grid;
  height: 315px;
  border-top: 2px solid #8c8cd4;
  font-size: 27px;
  line-height: 20px;
  color: #161a3a;
}
.wave > * {
  grid-area: 1 / 1;
}
.wave svg {
  width: 100%;
  height: 313px;
}
.wave .scale {
  display: flex;
  flex-direction: column;
  justify-content: space-between;
  padding: 2px 0 0 1px;
}
.w1 .gutter {
  background: #c9d1e3;
  color: #1b2138;
}
.w1 .wave {
  background: #dfe7fa;
}
.w2 .gutter {
  background: #cdcbe3;
  color: #201c3c;
}
.w2 .wave {
  background: #e3e1fe;
}
.track-bar {
  display: flex;
  flex-direction: column;
  width: 29px;
  background: #f2f2f2;
}
.track-bar .btn {
  display: flex;
  align-items: center;
  justify-content: center;
  height: 29px;
  border: 1px solid #fff;
  border-right: 2px solid #777;
  border-bottom: 3px solid #777;
  color: #a0a0a0;
}
.track-bar .btn:first-child svg {
  transform: rotate(180deg);
}
.track-bar .thumb {
  height: 30px;
  background: #cdcdcd;
}
.track-bar .last {
  margin-top: auto;
}

/* footer */
.actions {
  display: flex;
  height: 66px;
  padding: 4px 0;
  border-top: 2px solid #77797a;
  background: #42515f;
  color: #e3e7ea;
  font-size: 21px;
}
.actions button {
  align-items: flex-end;
  width: 14.36%;
  gap: 8px;
  line-height: 32px;
  height: 58px;
  padding-bottom: 7px;
  border-right: 2px solid #c4cacf;
}
.actions .quit {
  flex: 1;
  border-right: none;
}
.actions svg {
  fill: none;
  stroke: #dde3e6;
  stroke-width: 3;
}
.log-icon {
  position: relative;
  padding-bottom: 4px;
}
.log-icon b {
  position: absolute;
  left: 0;
  right: 0;
  top: 15px;
  font-size: 14px;
  line-height: 20px;
  text-align: center;
}
```
FILE: timeline.js
```js
const START = 2.677;
const END = 5.783;
const SVG = "http://www.w3.org/2000/svg";

function el(parent, tag, cls, text) {
  const node = document.createElement(tag);
  if (cls) node.className = cls;
  if (text) node.textContent = text;
  parent.appendChild(node);
  return node;
}

// each annotation: [end time, label, state]
const A = [4.144915, 4.314915, 4.484915, 4.624915, 4.914915, 5.094915, 5.606219];
const TRACKS = [
  {
    cls: "t1",
    tiers: [
      [[2.77, "#"], [2.95, "m"], [A[0], "#"], [4.184915, "n"], [4.244915, "a~"], [A[1], "m"], [4.364915, "l"], [A[2], "A/"],
        [4.544915, "l"], [A[3], "A/"], [4.764915, "s"], [A[4], "e"], [5.034915, "l"], [A[5], "A/"], [5.254, "s"], [A[6], "e"], [END, "#"]],
      [[2.77, "#"], [2.95, "mh"], [A[0], "#"], [4.244915, "non"], [A[1], "mais"], [A[2], "là"], [A[3], "là"], [A[4], "c'est"],
        [A[5], "là"], [A[6], "c'est"], [END, "#"]],
      [[2.77, "#=0.0"], [2.95, "m=0.0"], [A[0], "#=0.0"], [4.244915, "n-a~=..."], [A[1], "m=..."], [A[2], "l-A/"], [A[3], "l-A/"],
        [A[4], "s-e"], [A[5], "l-A/"], [A[6], "s-e"], [END, "#=0.0"]],
    ],
  },
  {
    cls: "t2 tall",
    tiers: [
      [[A[0], ""], [A[1], "n-a~-m", "current"], [A[2], "l-A/"], [A[3], "l-A/"], [A[4], "s-e"], [A[5], "l-A/"], [A[6], "s-e"], [END, ""]],
      [[A[0], ""], [A[1], "N-V-N"], [A[2], "L-V"], [A[3], "L-V"], [A[4], "F-V"], [A[5], "L-V"], [A[6], "F-V"], [END, ""]],
    ],
  },
  {
    cls: "w1",
    // [from, to, [[up, down], ...]] along the signal
    wave: [
      [122, 263, [[5, 5], [6, 7], [6, 8], [7, 7], [9, 8], [8, 9], [6, 8], [4, 8]]],
      [270, 285, [[2, 2], [2, 2]]],
      [1619, 1622, [[2, 1], [2, 1]]],
      [1637, 1932, [[4, 6], [9, 14], [12, 19], [10, 17], [6, 10], [7, 9], [9, 13], [11, 22], [8, 17], [8, 14], [9, 15], [11, 19], [11, 22], [10, 20], [5, 14], [3, 4]]],
      [1945, 1951, [[4, 1], [2, 1]]],
      [1974, 2139, [[3, 9], [8, 16], [10, 20], [12, 15], [15, 30], [15, 34], [16, 33], [15, 25], [10, 18], [4, 6]]],
      [2139, 2250, [[3, 1], [2, 3], [2, 1], [1, 4], [3, 1], [1, 2]]],
      [2265, 2415, [[6, 6], [8, 16], [6, 15], [5, 10], [5, 10], [5, 9], [4, 9], [2, 4]]],
      [2432, 2447, [[4, 7], [4, 7]]],
      [2495, 2499, [[2, 1], [2, 1]]],
      [2523, 2658, [[4, 9], [5, 13], [11, 15], [11, 20], [11, 19], [10, 14], [10, 10], [3, 4]]],
      [2658, 2776, [[4, 1], [4, 1], [2, 2], [1, 2], [2, 1], [1, 1]]],
      [2799, 3087, [[8, 12], [8, 18], [7, 16], [7, 15], [7, 14], [7, 13], [5, 13], [4, 12], [4, 12], [4, 11], [3, 7], [3, 8]]],
      [3102, 3164, [[3, 5], [3, 4], [4, 5]]],
    ],
  },
  {
    cls: "t3",
    tiers: [
      [[3.144, "#"], [3.264, "f"], [3.294, ""], [3.346, "d"], [3.474, "R"], [3.535, "E"], [3.635, "k"], [3.685, "O~"], [3.744, "s"],
        [3.825, "R"], [3.884, "E"], [3.924, "v"], [4.024, "E"], [4.14, "j"], [END, "#"]],
      [[3.144, "#"], [3.535, "faudrait"], [3.635, "qu'"], [3.685, "on"], [3.744, "se"], [4.14, "réveille"], [END, "#"]],
      [[3.144, "#=0.0"], [3.535, "f-O/-d-R-E=0.451"], [3.635, "k"], [3.685, "O.."], [3.744, "s=..."], [4.14, "R-E-v-E-j=0.511"], [END, "#=0.0"]],
    ],
  },
  {
    cls: "t4 tall",
    tiers: [
      [[3.144, ""], [3.294, "f-O/"], [3.535, "d-R-E"], [3.685, "k-O~"], [3.884, "s-R-E"], [4.14, "v-E-j"], [END, ""]],
      [[3.144, ""], [3.294, "F-V"], [3.535, "P-L-V"], [3.685, "P-V"], [3.884, "F-L-V"], [4.14, "F-V-G"], [END, ""]],
    ],
  },
  {
    cls: "w2",
    wave: [
      [545, 550, [[4, 3], [2, 3]]],
      [738, 741, [[2, 0], [2, 0]]],
      [765, 795, [[2, 2], [4, 4], [2, 3]]],
      [838, 862, [[2, 2], [2, 4]]],
      [862, 937, [[4, 5], [5, 8], [5, 8], [5, 7], [2, 2]]],
      [1042, 1100, [[5, 5], [7, 7], [6, 7], [5, 7], [2, 3]]],
      [1100, 1120, [[2, 3], [1, 1]]],
      [1255, 1467, [[2, 3], [2, 3], [1, 2], [2, 3], [2, 3], [2, 2]]],
    ],
  },
];

function ruler() {
  const root = document.getElementById("ruler");
  for (let t = 270; t <= 575; t += 5) {
    let label = (t / 100).toFixed(2);
    // the end boxes hide the outermost labels
    if (t === 270 || t === 575) label = "";
    if (t === 275) label = "75";
    const mark = el(root, "div", "mark");
    el(mark, "span", "", label);
    if (t % 10 === 0) mark.classList.add("major");
    if (t === 275) mark.classList.add("partial");
    if (t === 270) mark.style.flexGrow = 48;
  }
  el(root, "span").style.flexGrow = 8;
}

function tier(parent, anns) {
  const row = el(parent, "div", "tier");
  let from = START;
  for (const [to, label, state] of anns) {
    const empty = !label && to - from > 0.1;
    const cell = el(row, "div", "ann " + (state || (empty ? "blank" : "")), label);
    cell.style.flexGrow = Math.round((to - from) * 1000);
    from = to;
  }
}

function signal(bursts) {
  const mid = 157;
  let d = "";
  for (const [x0, x1, env] of bursts) {
    d += `M${x0} ${mid}`;
    let n = 0;
    for (let x = x0; x < x1; x += n % 3 ? 9 : 8) {
      n++;
      const p = ((x - x0) / (x1 - x0)) * (env.length - 1);
      const i = Math.min(Math.floor(p), env.length - 2);
      const k = 1 - 0.15 * (n % 2);
      const up = Math.round(env[i][0] + (env[i + 1][0] - env[i][0]) * (p - i));
      const down = Math.round(k * (env[i][1] + (env[i + 1][1] - env[i][1]) * (p - i)));
      const low = Math.min(down, 4);
      d += `L${x} ${mid + low}V${mid - up + 3}L${x + 2} ${mid - up}H${x + 3}L${x + 4} ${mid + low}`;
      d += `V${mid + down}V${mid + Math.round(down / 2)}L${x + 6} ${mid - Math.round(up / 2)}V${mid + low}`;
    }
  }
  return d;
}

function wave(parent, bursts) {
  const box = el(parent, "div", "wave");
  const svg = document.createElementNS(SVG, "svg");
  svg.setAttribute("viewBox", "0 0 3378 313");
  svg.setAttribute("preserveAspectRatio", "none");
  svg.innerHTML = `<path d="M16 157H3378" stroke="#8c8cdc" stroke-width="2"/><path d="${signal(bursts)}" fill="none" stroke="#1b1d38" stroke-width="2"/>`;
  box.appendChild(svg);
  const scale = el(box, "div", "scale");
  for (const v of ["1", "0", "-1"]) el(scale, "span", "", v);
}

ruler();
const list = document.getElementById("tracks");
for (const track of TRACKS) {
  const row = el(list, "div", "row " + track.cls);
  el(row, "div", "gutter").innerHTML = '<svg width="32" height="20"><use href="#m-tri" /></svg>';
  if (track.wave) {
    wave(row, track.wave);
  } else {
    const body = el(row, "div", "body");
    for (const anns of track.tiers) tier(body, anns);
  }
}
```
